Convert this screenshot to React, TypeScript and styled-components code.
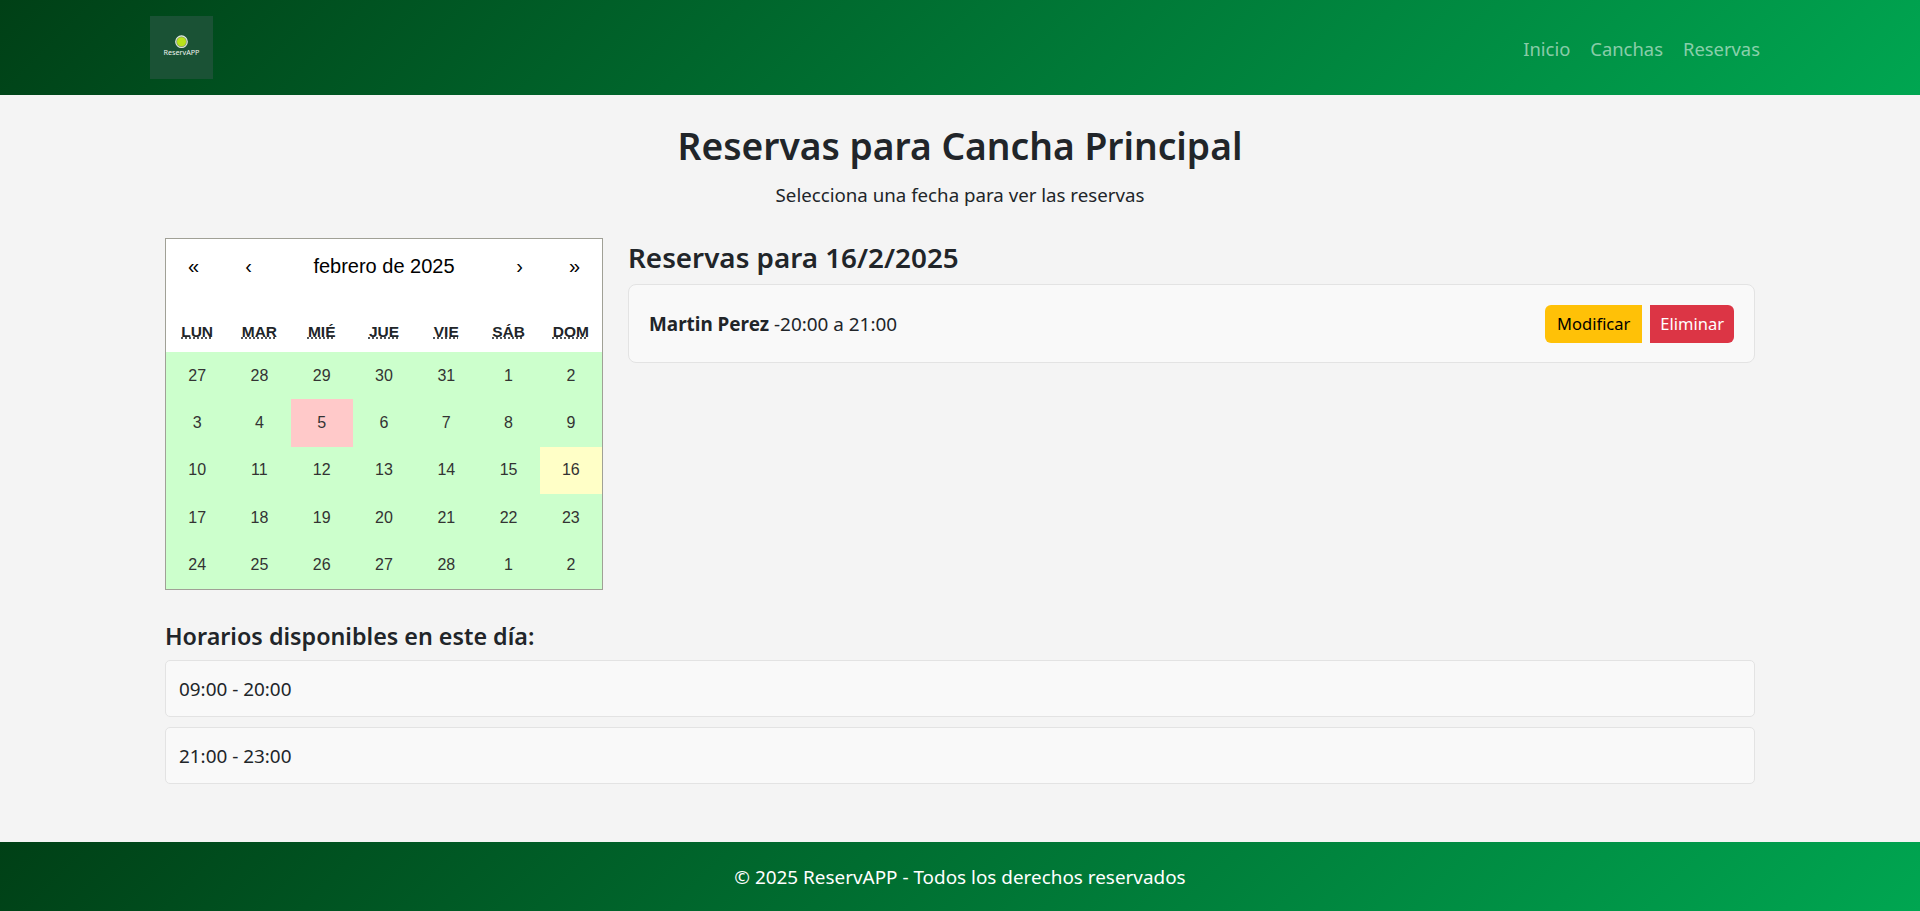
import React from "react";
import styled, { createGlobalStyle } from "styled-components";

const weekDays = ["LUN", "MAR", "MIÉ", "JUE", "VIE", "SÁB", "DOM"];
const days = [
  27, 28, 29, 30, 31, 1, 2, 3, 4, 5, 6, 7, 8, 9, 10, 11, 12, 13, 14, 15, 16, 17, 18, 19, 20, 21, 22,
  23, 24, 25, 26, 27, 28, 1, 2,
];

const App = () => {
  return (
    <Page>
      <GlobalStyle />
      <Navbar>
        <Logo>
          <svg width="63" height="63" viewBox="0 0 63 63">
            <circle cx="31.5" cy="25.7" r="5.8" fill="#7f9c6a" stroke="#e4ebdf" strokeWidth="1.1" />
            <circle cx="31.5" cy="25.7" r="4.5" fill="#b9e41a" />
          </svg>
          <LogoText>ReservAPP</LogoText>
        </Logo>
        <NavLinks>
          <NavLink>Inicio</NavLink>
          <NavLink>Canchas</NavLink>
          <NavLink>Reservas</NavLink>
        </NavLinks>
      </Navbar>
      <Main>
        <Title>Reservas para Cancha Principal</Title>
        <Subtitle>Selecciona una fecha para ver las reservas</Subtitle>
        <Columns>
          <Calendar>
            <CalendarNav>
              <NavArrow>«</NavArrow>
              <NavArrow>‹</NavArrow>
              <MonthLabel>febrero de 2025</MonthLabel>
              <NavArrow>›</NavArrow>
              <NavArrow>»</NavArrow>
            </CalendarNav>
            <WeekDays>
              {weekDays.map((d) => (
                <WeekDay key={d}>
                  <abbr>{d}</abbr>
                </WeekDay>
              ))}
            </WeekDays>
            <DayGrid>
              {days.map((d, i) => (
                <Day key={i} $tone={i === 9 ? "busy" : i === 20 ? "active" : "free"}>
                  {d}
                </Day>
              ))}
            </DayGrid>
          </Calendar>
          <Bookings>
            <BookingsTitle>Reservas para 16/2/2025</BookingsTitle>
            <BookingCard>
              <div>
                <strong>Martin Perez</strong> -20:00 a 21:00
              </div>
              <Actions>
                <ActionButton $variant="edit">Modificar</ActionButton>
                <ActionButton $variant="delete">Eliminar</ActionButton>
              </Actions>
            </BookingCard>
          </Bookings>
        </Columns>
        <SlotsTitle>Horarios disponibles en este día:</SlotsTitle>
        <SlotList>
          <Slot>09:00 - 20:00</Slot>
          <Slot>21:00 - 23:00</Slot>
        </SlotList>
      </Main>
      <Footer>© 2025 ReservAPP - Todos los derechos reservados</Footer>
    </Page>
  );
};

const GlobalStyle = createGlobalStyle`
  * {
    box-sizing: border-box;
  }
  body {
    margin: 0;
    background: #f4f4f4;
    color: #212529;
    font-family: "Noto Sans", "Open Sans", sans-serif;
    font-size: 16px;
  }
`;

const Page = styled.div`
  display: flex;
  flex-direction: column;
  min-height: 911px;
`;

const Navbar = styled.nav`
  display: flex;
  align-items: center;
  justify-content: space-between;
  height: 95px;
  padding: 0 160px 0 150px;
  background: linear-gradient(135deg, #004016, #00a651);
`;

const Logo = styled.div`
  position: relative;
  width: 63px;
  height: 63px;
  background: #1a5235;
`;

const LogoText = styled.span`
  position: absolute;
  left: 0;
  right: 0;
  top: 32px;
  color: #eef3ee;
  font-size: 7.2px;
  line-height: 8px;
  text-align: center;
`;

const NavLinks = styled.div`
  display: flex;
  gap: 20px;
  padding-top: 1px;
`;

const NavLink = styled.a`
  color: rgba(255, 255, 255, 0.55);
  font-size: 18.4px;
`;

const Main = styled.main`
  flex: 1;
  padding: 0 165px;
`;

const Title = styled.h1`
  margin: 24px 0 0;
  font-size: 37.2px;
  font-weight: 600;
  line-height: 54px;
  text-align: center;
`;

const Subtitle = styled.p`
  margin: 8px 0 0;
  font-size: 18.7px;
  line-height: 27px;
  text-align: center;
`;

const Columns = styled.div`
  display: flex;
  gap: 25px;
  margin-top: 30px;
`;

const Calendar = styled.div`
  flex: none;
  width: 438px;
  height: 352px;
  background: #fff;
  border: 1px solid #a0a096;
  font-family: "Liberation Sans", Arial, sans-serif;
`;

const CalendarNav = styled.div`
  display: flex;
  align-items: center;
  height: 44px;
  margin-top: 5px;
`;

const NavArrow = styled.button`
  width: 55px;
  height: 44px;
  padding: 0;
  background: none;
  border: none;
  color: #000;
  font-family: inherit;
  font-size: 20px;
`;

const MonthLabel = styled.span`
  flex: 1;
  color: #000;
  font-size: 20px;
  text-align: center;
`;

const WeekDays = styled.div`
  display: grid;
  grid-template-columns: repeat(7, 1fr);
  height: 64px;
  padding-top: 34px;
`;

const WeekDay = styled.div`
  font-size: 15.5px;
  font-weight: 700;
  line-height: 20px;
  text-align: center;

  abbr {
    text-decoration: underline dotted;
    text-underline-offset: 1px;
  }
`;

const DayGrid = styled.div`
  display: grid;
  grid-template-columns: repeat(7, 1fr);
  grid-auto-rows: 47.4px;
`;

const Day = styled.div<{ $tone: "free" | "busy" | "active" }>`
  display: flex;
  align-items: center;
  justify-content: center;
  color: #333;
  font-size: 16px;
  background: ${({ $tone }) =>
    $tone === "busy" ? "#ffc9c9" : $tone === "active" ? "#ffffc7" : "#ccffcc"};
`;

const Bookings = styled.div`
  flex: 1;
`;

const BookingsTitle = styled.h3`
  margin: 0;
  font-size: 27.8px;
  font-weight: 600;
  line-height: 38px;
`;

const BookingCard = styled.div`
  display: flex;
  align-items: center;
  justify-content: space-between;
  height: 79px;
  margin-top: 8px;
  padding: 0 20px;
  background: #f9f9f9;
  border: 1px solid #e3e3e3;
  border-radius: 8px;
  font-size: 18.9px;

  strong {
    font-weight: 700;
  }
`;

const Actions = styled.div`
  display: flex;
  gap: 8px;
`;

const ActionButton = styled.button<{ $variant: "edit" | "delete" }>`
  height: 38px;
  padding: 0 ${({ $variant }) => ($variant === "edit" ? "12px" : "10px")};
  border: none;
  font-family: inherit;
  font-size: 16.5px;
  color: ${({ $variant }) => ($variant === "edit" ? "#000" : "#fff")};
  background: ${({ $variant }) => ($variant === "edit" ? "#ffc107" : "#dc3545")};
  border-radius: ${({ $variant }) => ($variant === "edit" ? "6px 0 0 6px" : "0 6px 6px 0")};
`;

const SlotsTitle = styled.h4`
  margin: 28px 0 0;
  font-size: 23.3px;
  font-weight: 600;
  line-height: 36px;
`;

const SlotList = styled.div`
  display: flex;
  flex-direction: column;
  gap: 10px;
  margin-top: 6px;
`;

const Slot = styled.div`
  display: flex;
  align-items: center;
  height: 57px;
  padding: 0 13px;
  background: #f9f9f9;
  border: 1px solid #e3e3e3;
  border-radius: 5px;
  font-size: 18.9px;
`;

const Footer = styled.footer`
  display: flex;
  align-items: center;
  justify-content: center;
  height: 69px;
  color: #fff;
  font-size: 18.9px;
  background: linear-gradient(135deg, #004016, #00a651);
`;

export default App;
